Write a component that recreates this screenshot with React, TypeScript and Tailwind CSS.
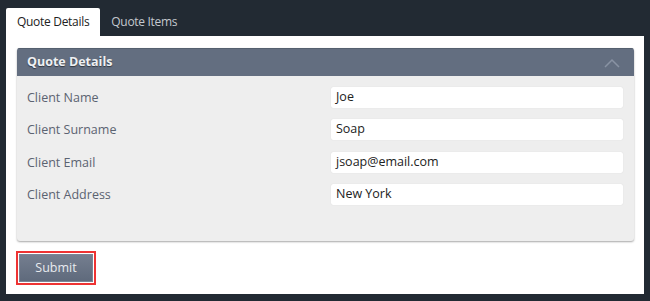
export default function App() {
  const rows = [
    { label: "Client Name", value: "Joe" },
    { label: "Client Surname", value: "Soap" },
    { label: "Client Email", value: "jsoap@email.com" },
    { label: "Client Address", value: "New York" },
  ];

  return (
    <div className="w-[650px] h-[301px] bg-[#222a33] px-[6px] pt-[8px] font-['Open_Sans',sans-serif] text-[12.5px]">
      {/* tabs */}
      <div className="flex h-[28px] text-[12px] tracking-[-0.3px]">
        <div className="flex items-center px-[11px] bg-white text-[#222] rounded-t-[2px]">Quote Details</div>
        <div className="flex items-center px-[11px] text-[#c4c8ce]">Quote Items</div>
      </div>

      {/* tab content */}
      <div className="w-[638px] h-[258px] bg-white pt-[12px] pl-[11px]">
        <div className="w-[617px] rounded-[3px] bg-[#eeeeee] shadow-[0_1px_2px_rgba(0,0,0,0.35)] overflow-hidden">
          <div className="flex items-center justify-between h-[28px] pl-[10px] pr-[14px] bg-[#636e80] border-t border-[#55606f]">
            <span className="font-bold text-[#eef0f3] [text-shadow:0_1px_1px_rgba(0,0,0,0.5)]">Quote Details</span>
            <svg width="16" height="10" viewBox="0 0 16 10" fill="none">
              <path d="M1 9 L8 2 L15 9" stroke="#8993a3" strokeWidth="1.5" />
            </svg>
          </div>
          <div className="flex flex-col gap-[11.5px] pt-[10.5px] pb-[36px] pl-[10px] pr-[11px]">
            {rows.map((r) => (
              <div key={r.label} className="flex items-center justify-between h-[21px]">
                <span className="text-[#5b6371] pt-[2px]">{r.label}</span>
                <div className="w-[292px] h-[21px] bg-white rounded-[2px] px-[5px] flex items-center text-[#222] shadow-[0_0_1px_rgba(0,0,0,0.15)]">
                  {r.value}
                </div>
              </div>
            ))}
          </div>
        </div>

        <div className="mt-[10px] ml-[-1px] w-[80px] h-[34px] border-2 border-[#ee3333] p-[1px]">
          <button className="w-full h-full bg-gradient-to-b from-[#747e8f] to-[#5f6a7c] border border-[#7a8697] text-[#e8ebef] text-[12.5px]">
            Submit
          </button>
        </div>
      </div>
    </div>
  );
}
